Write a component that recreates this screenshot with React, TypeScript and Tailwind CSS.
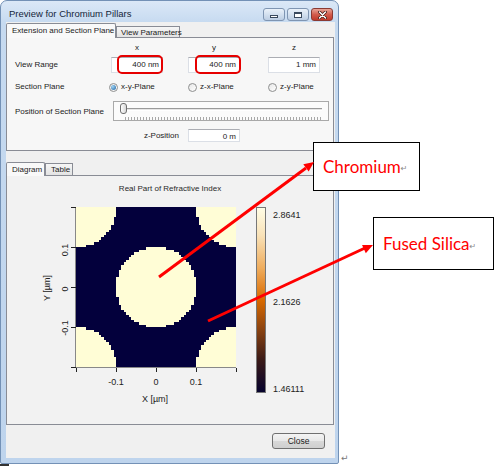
import React from "react";

const CREAM = "#fffdd6";
const NAVY = "#03003c";

// pixelated pillar pattern (simulation grid), merged into row runs
const CELLS = 64;
const SIZE = 160;
const STEP = SIZE / CELLS;
const PILLARS = [
  [80, 80],
  [0, 0],
  [160, 0],
  [0, 160],
  [160, 160],
];

function pillarRuns() {
  const runs: { x: number; y: number; w: number }[] = [];
  for (let j = 0; j < CELLS; j++) {
    let start = -1;
    for (let i = 0; i <= CELLS; i++) {
      let inside = false;
      if (i < CELLS) {
        const cx = (i + 0.5) * STEP;
        const cy = (j + 0.5) * STEP;
        inside = PILLARS.some(([px, py]) => (cx - px) ** 2 + (cy - py) ** 2 <= 40 * 40);
      }
      if (inside && start < 0) start = i;
      if (!inside && start >= 0) {
        runs.push({ x: start * STEP, y: j * STEP, w: (i - start) * STEP });
        start = -1;
      }
    }
  }
  return runs;
}

const runs = pillarRuns();

function arrowHead(x1: number, y1: number, x2: number, y2: number) {
  const a = Math.atan2(y2 - y1, x2 - x1);
  const len = 10;
  const half = 4.5;
  const bx = x2 - len * Math.cos(a);
  const by = y2 - len * Math.sin(a);
  const px = -Math.sin(a) * half;
  const py = Math.cos(a) * half;
  return `${x2},${y2} ${bx + px},${by + py} ${bx - px},${by - py}`;
}

const Chart = () => (
  <svg width="200" height="206" viewBox="0 0 200 206" className="block shrink-0">
    <defs>
      <clipPath id="plot">
        <rect x="36" y="5" width="160" height="160" />
      </clipPath>
    </defs>
    <rect x="36" y="5" width="160" height="160" fill={NAVY} />
    <g clipPath="url(#plot)" shapeRendering="crispEdges" fill={CREAM}>
      {runs.map((r, k) => (
        <rect key={k} x={36 + r.x} y={5 + r.y} width={r.w} height={STEP + 0.2} />
      ))}
    </g>
    <g stroke="#555" strokeWidth="1" shapeRendering="crispEdges">
      <line x1="36" y1="165.5" x2="196" y2="165.5" stroke="#888" />
      <line x1="35.5" y1="5" x2="35.5" y2="166" stroke="#888" />
      {[36, 76, 116, 156, 196].map((x) => (
        <line key={x} x1={x + 0.5} y1="166" x2={x + 0.5} y2="170" stroke="#222" />
      ))}
      {[5, 45, 85, 125, 165].map((y) => (
        <line key={y} x1="31" y1={y + 0.5} x2="36" y2={y + 0.5} stroke="#222" />
      ))}
    </g>
    <g fontSize="9" fill="#222" textAnchor="middle">
      <text x="76" y="183">-0.1</text>
      <text x="116" y="183">0</text>
      <text x="156" y="183">0.1</text>
      <text x="115" y="200">X [µm]</text>
      <text x="0" y="0" transform="translate(28 48) rotate(-90)">0.1</text>
      <text x="0" y="0" transform="translate(28 87) rotate(-90)">0</text>
      <text x="0" y="0" transform="translate(28 126) rotate(-90)">-0.1</text>
      <text x="0" y="0" transform="translate(10 86) rotate(-90)">Y [µm]</text>
    </g>
  </svg>
);

const ColorBar = () => (
  <svg width="10" height="186" viewBox="0 0 10 186" className="block shrink-0 ml-[16px] mt-[5px]">
    <defs>
      <linearGradient id="cmap" x1="0" y1="0" x2="0" y2="1">
        <stop offset="0" stopColor="#fffde6" />
        <stop offset="0.15" stopColor="#f9e2b8" />
        <stop offset="0.33" stopColor="#efac5c" />
        <stop offset="0.5" stopColor="#d96a00" />
        <stop offset="0.65" stopColor="#8f4510" />
        <stop offset="0.82" stopColor="#3c1b17" />
        <stop offset="1" stopColor="#05022e" />
      </linearGradient>
    </defs>
    <rect x="0.5" y="0.5" width="9" height="185" fill="url(#cmap)" stroke="#777" />
  </svg>
);

const Input = ({ value, ring }: { value: string; ring?: string }) => (
  <div className="relative h-full bg-white border border-[#dbdfe6] border-t-[#abadb3] text-right pr-[3px] text-[8px] leading-[14px]">
    {value}
    {ring === "x" && (
      <div className="absolute left-[5px] -right-[1px] -top-[3px] -bottom-[2px] border-2 border-[#e60000] rounded-[5px]" />
    )}
    {ring === "y" && (
      <div className="absolute left-[6px] -right-[2px] -top-[3px] -bottom-[2px] border-2 border-[#e60000] rounded-[5px]" />
    )}
  </div>
);

const Radio = ({ label, on, first }: { label: string; on?: boolean; first?: boolean }) => (
  <div className={`flex items-center gap-[3px] whitespace-nowrap ${first ? "-ml-[2px]" : ""}`}>
    <span className="w-[9px] h-[9px] rounded-full border border-[#8e8f8f] bg-[linear-gradient(to_bottom_right,#e6e6e6,#ffffff)] flex items-center justify-center">
      {on && <span className="w-[5px] h-[5px] rounded-full bg-[radial-gradient(circle_at_35%_35%,#9fd4f5,#1b5f9e)]" />}
    </span>
    <span>{label}</span>
  </div>
);

const App = () => {
  return (
    <div className="relative w-[498px] h-[466px] bg-white overflow-hidden font-['Liberation_Sans',Arial,sans-serif] text-[#1b1b1b]">
      {/* dialog window */}
      <div className="w-[339px] h-[464px] rounded-t-[7px] rounded-b-[2px] border border-[#7391b6] bg-[linear-gradient(to_bottom,#dbe8f7,#c6daf0_22px,#bed4ed)] flex flex-col pl-[5px] pr-[3px] pb-[5px]">
        <div className="h-[21px] flex items-start shrink-0">
          <span className="pt-[7px] pl-[3px] text-[9.5px] leading-[12px] text-[#15253a]">
            Preview for Chromium Pillars
          </span>
          <div className="ml-auto mr-[2px] mt-[7px] flex gap-[2px]">
            <div className="w-[22px] h-[13px] rounded-[3px] border border-[#7f95b2] bg-[linear-gradient(to_bottom,#eaf1f9,#d3e0ef_50%,#bccde3)] flex items-end justify-center pb-[2px]">
              <span className="w-[8px] h-[3px] bg-white border border-[#3a4a5e]" />
            </div>
            <div className="w-[22px] h-[13px] rounded-[3px] border border-[#7f95b2] bg-[linear-gradient(to_bottom,#eaf1f9,#d3e0ef_50%,#bccde3)] flex items-center justify-center">
              <span className="w-[8px] h-[6px] border border-[#3a4a5e] border-t-2 bg-white" />
            </div>
            <div className="w-[22px] h-[13px] rounded-[3px] border border-[#8a3a33] bg-[linear-gradient(to_bottom,#e8a598,#d25b4c_50%,#c0392b)] flex items-center justify-center">
              <svg width="9" height="8" viewBox="0 0 9 8">
                <path d="M1.5 1 L7.5 7 M7.5 1 L1.5 7" stroke="#3b1410" strokeWidth="3" strokeLinecap="round" />
                <path d="M1.5 1 L7.5 7 M7.5 1 L1.5 7" stroke="#ffffff" strokeWidth="1.6" strokeLinecap="round" />
              </svg>
            </div>
          </div>
        </div>

        <div className="flex-1 bg-[#f0f0f0] flex flex-col text-[8px] leading-[10px]">
          {/* upper tabs */}
          <div className="h-[15px] flex items-end shrink-0">
            <div className="relative z-10 -mb-px w-[110px] h-[15px] pl-[5px] pt-[2px] border border-b-0 border-[#898c95] bg-[#f9f9f9] whitespace-nowrap rounded-t-[2px]">
              Extension and Section Plane
            </div>
            <div className="w-[64px] h-[11px] pl-[4px] border border-b-0 border-[#898c95] bg-[linear-gradient(to_bottom,#f6f6f6,#e3e3e3)] whitespace-nowrap leading-[11px]">
              View Parameters
            </div>
          </div>

          <div className="w-[328px] h-[114px] border border-[#898c95] bg-[#f7f7f7] pl-[8px] shrink-0">
            <div className="grid grid-cols-[96px_52px_25px_52px_28px_52px] mt-[5px] h-[10px]">
              <span />
              <span className="text-center">x</span>
              <span />
              <span className="text-center">y</span>
              <span />
              <span className="text-center">z</span>
            </div>
            <div className="grid grid-cols-[96px_52px_25px_52px_28px_52px] mt-[4px] h-[16px] items-center">
              <span>View Range</span>
              <Input value="400 nm" ring="x" />
              <span />
              <Input value="400 nm" ring="y" />
              <span />
              <Input value="1 mm" />
            </div>
            <div className="grid grid-cols-[96px_77px_80px_52px] mt-[7px] h-[14px] items-center">
              <span>Section Plane</span>
              <Radio label="x-y-Plane" on first />
              <Radio label="z-x-Plane" />
              <Radio label="z-y-Plane" />
            </div>
            <div className="flex mt-[7px] h-[20px] items-center">
              <span className="w-[98px] shrink-0 pt-[2px]">Position of Section Plane</span>
              <div className="relative w-[216px] h-[20px] border border-[#a9a9a9] bg-[#fbfbfb]">
                <div className="absolute left-[11px] right-[6px] top-[6px] h-[3px] border-t border-[#9a9a9a] border-b border-b-white bg-[#e6e6e6]" />
                <div className="absolute left-[11px] right-[6px] top-[15px] h-[3px] bg-[repeating-linear-gradient(to_right,#a8a8a8_0_1px,transparent_1px_3px)]" />
                <div className="absolute left-[6px] top-[1px] w-[7px] h-[11px] rounded-[3px] border border-[#6f6f6f] bg-[linear-gradient(to_right,#fdfdfd,#d7d7d7)]" />
              </div>
            </div>
            <div className="flex mt-[8px] h-[13px] items-center">
              <span className="w-[173px] shrink-0 text-right pr-[9px]">z-Position</span>
              <div className="w-[52px] h-[13px]">
                <Input value="0 m" />
              </div>
            </div>
          </div>

          {/* lower tabs */}
          <div className="mt-[10px] h-[14px] flex items-end shrink-0">
            <div className="relative z-10 -mb-px w-[39px] h-[14px] pl-[5px] pt-[2px] border border-b-0 border-[#898c95] bg-[#f9f9f9] rounded-t-[2px]">
              Diagram
            </div>
            <div className="w-[28px] h-[12px] pl-[5px] pt-[1px] border border-b-0 border-[#898c95] bg-[linear-gradient(to_bottom,#f6f6f6,#e3e3e3)]">
              Table
            </div>
          </div>

          <div className="w-[328px] h-[250px] border border-[#898c95] bg-[#f2f2f2] shrink-0 flex flex-col">
            <div className="mt-[8px] text-center text-[#2a2a2a]">Real Part of Refractive Index</div>
            <div className="flex mt-[8px] ml-[33px]">
              <Chart />
              <ColorBar />
              <div className="ml-[7px] mt-[8px] h-[184px] flex flex-col justify-between text-[9px] leading-[10px] text-[#222]">
                <span>2.8641</span>
                <span>2.1626</span>
                <span>1.46111</span>
              </div>
            </div>
          </div>

          <div className="mt-[8px] self-end mr-[10px] w-[53px] h-[16px] rounded-[3px] border border-[#707070] bg-[linear-gradient(to_bottom,#f4f4f4,#e8e8e8_50%,#d8d8d8_51%,#cfcfcf)] flex items-center justify-center text-[8.5px]">
            Close
          </div>
        </div>
      </div>

      {/* paragraph mark + bottom stub */}
      <span className="absolute left-[341px] top-[452px] text-[9px] text-[#777] font-['DejaVu_Sans',sans-serif]">↵</span>
      <div className="absolute left-0 bottom-0 w-[9px] h-[2px] bg-[#333]" />

      {/* annotation boxes */}
      <div className="absolute left-[313px] top-[142px] w-[107px] h-[49px] border border-black bg-white flex items-center pl-[9px] pb-[1px]">
        <span className="font-['Lato',sans-serif] text-[17px] text-[#ff0000] leading-none">Chromium</span>
        <span className="text-[8px] text-[#888] mt-[6px] font-['DejaVu_Sans',sans-serif]">↵</span>
      </div>
      <div className="absolute left-[373px] top-[217px] w-[121px] h-[53px] border border-black bg-white flex items-center pl-[9px]">
        <span className="font-['Lato',sans-serif] text-[17px] text-[#ff0000] leading-none">Fused Silica</span>
        <span className="text-[8px] text-[#888] mt-[6px] font-['DejaVu_Sans',sans-serif]">↵</span>
      </div>

      {/* annotation arrows */}
      <svg className="absolute inset-0 pointer-events-none" width="498" height="466">
        <line x1="159" y1="277" x2="306" y2="168" stroke="#ff0000" strokeWidth="3" />
        <polygon points={arrowHead(159, 277, 314, 162)} fill="#ff0000" />
        <line x1="208" y1="321" x2="365" y2="248" stroke="#ff0000" strokeWidth="3" />
        <polygon points={arrowHead(208, 321, 373, 245)} fill="#ff0000" />
      </svg>
    </div>
  );
};

export default App;
